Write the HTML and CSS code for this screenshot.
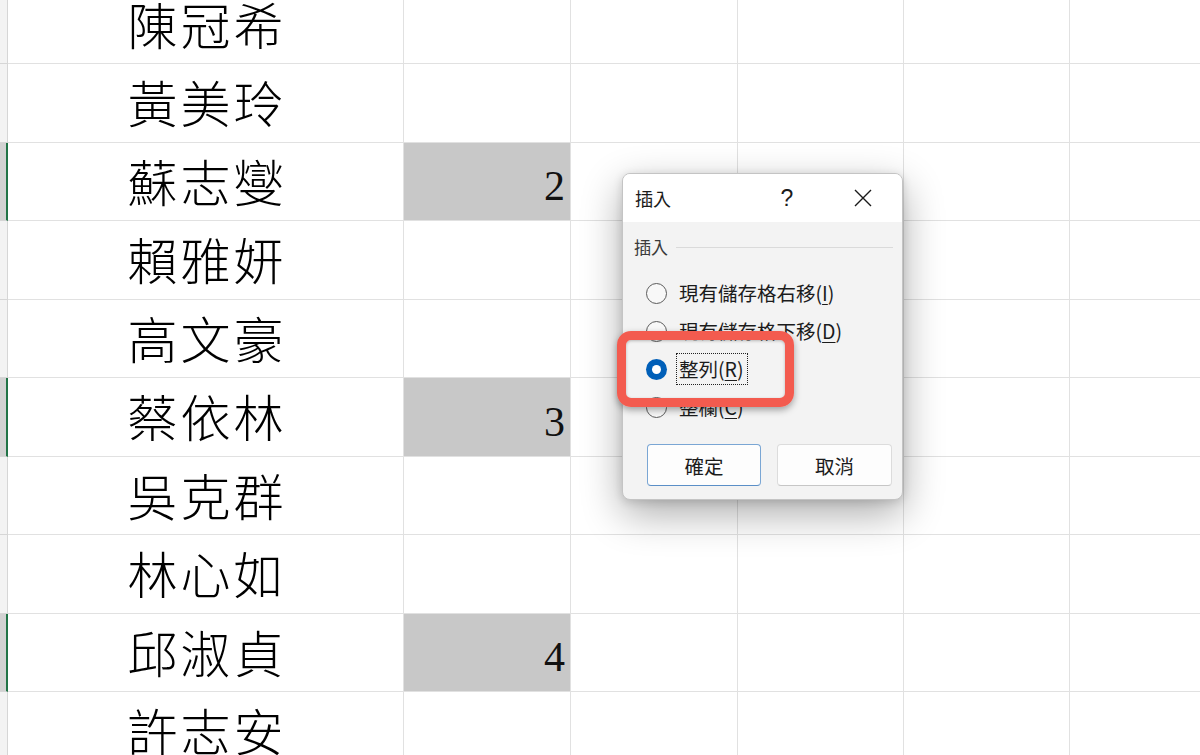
FILE: index.html
```html
<!DOCTYPE html>
<html lang="zh-Hant">
<head>
<meta charset="utf-8">
<title>插入</title>
<link rel="stylesheet" href="styles.css">
</head>
<body>
<div class="sheet">
  <div class="row"><div class="hd"></div><div class="c name">陳冠希</div><div class="c"></div><div class="c"></div><div class="c"></div><div class="c"></div><div class="c last"></div></div>
  <div class="row"><div class="hd"></div><div class="c name">黃美玲</div><div class="c"></div><div class="c"></div><div class="c"></div><div class="c"></div><div class="c last"></div></div>
  <div class="row sel"><div class="hd"></div><div class="c name">蘇志燮</div><div class="c num"><span>2</span></div><div class="c"></div><div class="c"></div><div class="c"></div><div class="c last"></div></div>
  <div class="row"><div class="hd"></div><div class="c name">賴雅妍</div><div class="c"></div><div class="c"></div><div class="c"></div><div class="c"></div><div class="c last"></div></div>
  <div class="row"><div class="hd"></div><div class="c name">高文豪</div><div class="c"></div><div class="c"></div><div class="c"></div><div class="c"></div><div class="c last"></div></div>
  <div class="row sel"><div class="hd"></div><div class="c name">蔡依林</div><div class="c num"><span>3</span></div><div class="c"></div><div class="c"></div><div class="c"></div><div class="c last"></div></div>
  <div class="row"><div class="hd"></div><div class="c name">吳克群</div><div class="c"></div><div class="c"></div><div class="c"></div><div class="c"></div><div class="c last"></div></div>
  <div class="row"><div class="hd"></div><div class="c name">林心如</div><div class="c"></div><div class="c"></div><div class="c"></div><div class="c"></div><div class="c last"></div></div>
  <div class="row sel"><div class="hd"></div><div class="c name">邱淑貞</div><div class="c num"><span>4</span></div><div class="c"></div><div class="c"></div><div class="c"></div><div class="c last"></div></div>
  <div class="row"><div class="hd"></div><div class="c name">許志安</div><div class="c"></div><div class="c"></div><div class="c"></div><div class="c"></div><div class="c last"></div></div>
</div>

<div class="dialog">
  <div class="titlebar">
    <div class="title">插入</div>
    <div class="help">?</div>
    <div class="close">
      <svg width="18" height="18" viewBox="0 0 18 18"><path d="M1 1L17 17M17 1L1 17" stroke="#1a1a1a" stroke-width="1.4" fill="none"/></svg>
    </div>
  </div>
  <div class="body">
    <div class="group"><span class="glabel">插入</span><span class="gline"></span></div>
    <div class="options">
      <div class="opt"><span class="radio"></span><span class="otext">現有儲存格右移(<u>I</u>)</span></div>
      <div class="opt"><span class="radio"></span><span class="otext">現有儲存格下移(<u>D</u>)</span></div>
      <div class="opt"><span class="radio on"></span><span class="otext focus">整列(<u>R</u>)</span></div>
      <div class="opt"><span class="radio"></span><span class="otext">整欄(<u>C</u>)</span></div>
    </div>
    <div class="buttons">
      <div class="btn ok">確定</div>
      <div class="btn">取消</div>
    </div>
  </div>
</div>

<div class="highlight"></div>
</body>
</html>
```

FILE: styles.css
```css
html, body {
  margin: 0;
  padding: 0;
  background: #ffffff;
  overflow: hidden;
  width: 1200px;
  height: 755px;
}

.sheet {
  margin-top: -14.5px;
}

.row {
  display: grid;
  grid-template-columns: 8px 396px 167px 167px 166px 166px 1fr;
  height: 78.5px;
}

.hd {
  box-sizing: border-box;
  background: #f3f3f3;
  border-right: 1px solid #d6d6d6;
  border-bottom: 1px solid #d6d6d6;
}

.row.sel .hd {
  background: #d2d2d2;
  border-right: 2px solid #217346;
}

.c {
  box-sizing: border-box;
  border-right: 1px solid #e1e1e1;
  border-bottom: 1px solid #e1e1e1;
}

.c.last {
  border-right: none;
}

.name {
  display: flex;
  align-items: center;
  justify-content: center;
  font-family: "Noto Sans CJK TC", "Noto Sans CJK SC", sans-serif;
  font-weight: 300;
  font-size: 50px;
  letter-spacing: 3px;
  padding-left: 3px;
  padding-bottom: 3px;
  color: #000;
}

.num {
  background: #c8c8c8;
  display: flex;
  align-items: flex-end;
  justify-content: flex-end;
  font-family: "Liberation Serif", serif;
  font-size: 42px;
  color: #111;
}

.num span {
  line-height: 1;
  padding: 0 5px 13px 0;
}

/* dialog */
.dialog {
  position: absolute;
  left: 622px;
  top: 173px;
  width: 281px;
  height: 327px;
  box-sizing: border-box;
  border: 1px solid #c4c4c4;
  border-radius: 8px;
  background: #f3f3f3;
  overflow: hidden;
  box-shadow: 0 14px 40px rgba(0, 0, 0, 0.33), 0 2px 10px rgba(0, 0, 0, 0.14);
  font-family: "Noto Sans CJK TC", "Noto Sans CJK SC", sans-serif;
  color: #1b1b1b;
}

.titlebar {
  height: 48px;
  background: #ffffff;
  display: flex;
  align-items: center;
  padding-left: 12px;
}

.title {
  flex: 1;
  font-size: 18px;
  line-height: 24px;
}

.help {
  width: 40px;
  margin-right: 36px;
  text-align: center;
  font-family: "Liberation Sans", sans-serif;
  font-size: 23px;
  line-height: 26px;
}

.close {
  width: 40px;
  margin-right: 19px;
  display: flex;
  justify-content: center;
  align-items: center;
}

.body {
  padding: 13px 9px 0 11px;
}

.group {
  display: flex;
  align-items: center;
  height: 24px;
}

.glabel {
  font-size: 17px;
  line-height: 24px;
  color: #3a3a3a;
}

.gline {
  flex: 1;
  height: 1px;
  background: #dadada;
  margin-left: 8px;
}

.options {
  margin-top: 15px;
  padding-left: 12px;
}

.opt {
  display: flex;
  align-items: center;
  height: 38px;
}

.radio {
  box-sizing: border-box;
  width: 21px;
  height: 21px;
  border-radius: 50%;
  border: 1px solid #5b5b5b;
  background: #f8f8f8;
  display: flex;
  align-items: center;
  justify-content: center;
  margin-right: 12px;
}

.radio.on {
  border: none;
  background: #005fb8;
}

.radio.on::after {
  content: "";
  width: 9px;
  height: 9px;
  border-radius: 50%;
  background: #ffffff;
}

.otext {
  font-size: 19.5px;
  line-height: 26px;
  white-space: nowrap;
}

.otext u {
  text-underline-offset: 3px;
  text-decoration-thickness: 1px;
}

.otext.focus {
  border: 1px dotted #222;
  padding: 2px 3px 2px 2px;
  margin-left: -3px;
}

.buttons {
  display: flex;
  gap: 16px;
  margin-top: 18px;
  padding-left: 13px;
}

.btn {
  box-sizing: border-box;
  width: 115px;
  height: 42px;
  border: 1px solid #dcdcdc;
  border-bottom-color: #c6c6c6;
  border-radius: 4px;
  background: #fdfdfd;
  display: flex;
  align-items: center;
  justify-content: center;
  font-size: 19.5px;
}

.btn.ok {
  width: 114px;
  border-color: #7aa6d4;
  border-bottom-color: #5b8fc7;
}

.highlight {
  position: absolute;
  left: 617px;
  top: 331px;
  width: 177px;
  height: 76px;
  box-sizing: border-box;
  border: 9px solid #f35b4f;
  border-radius: 14px;
  box-shadow: 0 3px 7px rgba(0, 0, 0, 0.35), inset 0 1px 3px rgba(0, 0, 0, 0.25);
}
```
